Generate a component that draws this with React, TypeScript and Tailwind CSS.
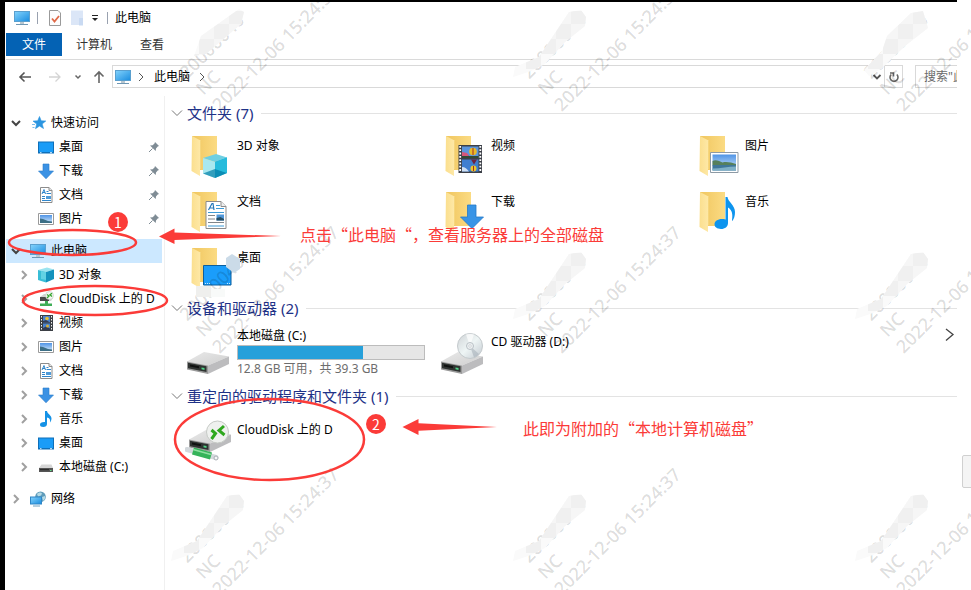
import type { ReactNode } from 'react';

type IconName =
  | 'star'
  | 'pc'
  | 'desktop'
  | 'download'
  | 'document'
  | 'picture'
  | 'cube'
  | 'cloud'
  | 'video'
  | 'music'
  | 'disk'
  | 'network';

interface NavEntry {
  label: string;
  icon: IconName;
  pinned?: boolean;
}

const quickAccess: NavEntry[] = [
  { label: '桌面', icon: 'desktop', pinned: true },
  { label: '下载', icon: 'download', pinned: true },
  { label: '文档', icon: 'document', pinned: true },
  { label: '图片', icon: 'picture', pinned: true },
];

const thisPc: NavEntry[] = [
  { label: '3D 对象', icon: 'cube' },
  { label: 'CloudDisk 上的 D', icon: 'cloud' },
  { label: '视频', icon: 'video' },
  { label: '图片', icon: 'picture' },
  { label: '文档', icon: 'document' },
  { label: '下载', icon: 'download' },
  { label: '音乐', icon: 'music' },
  { label: '桌面', icon: 'desktop' },
  { label: '本地磁盘 (C:)', icon: 'disk' },
];

const folders: NavEntry[] = [
  { label: '3D 对象', icon: 'cube' },
  { label: '视频', icon: 'video' },
  { label: '图片', icon: 'picture' },
  { label: '文档', icon: 'document' },
  { label: '下载', icon: 'download' },
  { label: '音乐', icon: 'music' },
  { label: '桌面', icon: 'desktop' },
];

/* ---------- shared gradients ---------- */

function Gradients() {
  return (
    <svg className="absolute size-0" aria-hidden="true">
      <defs>
        <linearGradient id="screen" x1="0" y1="0" x2="1" y2="1">
          <stop offset="0" stopColor="#7fd0fb" />
          <stop offset="1" stopColor="#1e8fe0" />
        </linearGradient>
        <linearGradient id="flap" x1="0" y1="0" x2="1" y2="0">
          <stop offset="0" stopColor="#fbdf8e" />
          <stop offset="1" stopColor="#fee9a9" />
        </linearGradient>
        <linearGradient id="back" x1="0" y1="0" x2="1" y2="0">
          <stop offset="0" stopColor="#f0c65f" />
          <stop offset="1" stopColor="#fbdb83" />
        </linearGradient>
        <linearGradient id="diskTop" x1="0" y1="0" x2="1" y2="1">
          <stop offset="0" stopColor="#e9e9e9" />
          <stop offset="1" stopColor="#cfcfcf" />
        </linearGradient>
        <linearGradient id="disc" x1="0" y1="0" x2="1" y2="1">
          <stop offset="0" stopColor="#cfd3d6" />
          <stop offset="0.5" stopColor="#eef5f5" />
          <stop offset="1" stopColor="#c2c8cf" />
        </linearGradient>
        <linearGradient id="sky" x1="0" y1="0" x2="0" y2="1">
          <stop offset="0" stopColor="#4f94e6" />
          <stop offset="1" stopColor="#d5e9fa" />
        </linearGradient>
      </defs>
    </svg>
  );
}

/* ---------- small icons, 16x16 ---------- */

const smallIcons: Record<IconName, ReactNode> = {
  star: (
    <>
      <path d="M9.5 1.5l1.7 4.3 4.6.2-3.6 2.9 1.3 4.6-4-2.5-4 2.7 1.2-4.7L3 6.1l4.7-.3z" fill="#2b95e0" stroke="#2b95e0" strokeWidth=".6" />
      <path d="M2 9.5h3M2.5 12.5h2" stroke="#7dbdea" />
    </>
  ),
  pc: (
    <>
      <path d="M0 1h16v11H0z" fill="#5a9fce" />
      <path d="M1 2h14v9H1z" fill="url(#screen)" />
      <path d="M6 12h4v2H6z" fill="#b9c7d0" />
      <path d="M2 14.500h12" stroke="#6f97b3" />
    </>
  ),
  desktop: (
    <>
      <path d="M0 2.5h16v12H0z" fill="#0f6fb8" />
      <path d="M1 3.5h14v9.5H1z" fill="#1a9cf7" />
      <path d="M2 13.7h1.5M12 13.7h2" stroke="#d8f0ff" />
    </>
  ),
  download: <path d="M5 1h6v7h4.5L8 15.8.5 8H5z" fill="#3b92e4" stroke="#2a7ccb" strokeWidth=".6" />,
  document: (
    <>
      <path d="M2.5.5h8.500l3 3v12h-11.500z" fill="#fff" stroke="#8c8c8c" />
      <path d="M11 .5v3h3" fill="#e7e7e7" stroke="#8c8c8c" />
      <path d="M4 7l2-4.500L7.500 7M4.500 5.500h2.500M8.500 4.500h2M8.500 6.500H13M4 9.500h3M4 11.500h3M4 13.500h9" stroke="#2f86cc" fill="none" />
      <path d="M8 9h5v3H8z" fill="#4f9bd8" />
    </>
  ),
  picture: (
    <>
      <path d="M.5 2.500h15v11H.5z" fill="#fff" stroke="#9a9a9a" />
      <path d="M2 4h12v8H2z" fill="url(#sky)" />
      <path d="M2 7.500l3 .5 5 2 4 .5v1.500H2z" fill="#3d6f86" />
    </>
  ),
  cube: (
    <>
      <path d="M0 3l9-2.500 7 2-8 2.500z" fill="#9be4f0" />
      <path d="M0 3l8 2v10.500L0 13z" fill="#38bdd6" />
      <path d="M8 5l8-2.500V12l-8 3.500z" fill="#1492bd" />
      <path d="M3 4l5 1v8l-5-1z" fill="#62d2e4" />
    </>
  ),
  cloud: (
    <>
      <path d="M2 6l4-3h9v4l-2 3H2z" fill="#d2d2d2" />
      <path d="M2 6h9v4H2z" fill="#4a4a4a" />
      <circle cx="11.500" cy="4.500" r="4" fill="#f3f7f2" stroke="#c3c8c2" strokeWidth=".6" />
      <path d="M9 3.500l2 1.500-2 2M14 2.200l-2 1.600 2 1.600" stroke="#35a52d" strokeWidth="1.300" fill="none" />
      <path d="M7 10h3v2.500h4V15H2v-2.500h5z" fill="#3fae57" />
    </>
  ),
  video: (
    <>
      <path d="M2 0h13v16H2z" fill="#3b3f45" />
      <path d="M5 1h7v6.500H5zM5 8.500h7V15H5z" fill="#4b83cf" />
      <path d="M3.500 1v15M13.500 1v15" stroke="#f2f2f2" strokeDasharray="1.500 1.500" />
      <circle cx="9" cy="3.500" r="1.800" fill="#e5c233" />
      <path d="M5 6l3-1 4 2.500H5zM5 13l3-1.500 4 2V15H5z" fill="#333b54" />
      <circle cx="9.500" cy="11" r="1.500" fill="#d9b035" />
    </>
  ),
  music: (
    <path d="M7 0h2c.3 3 4.500 4 4.500 7.500 0 1.500-.7 3-1.500 4 .5-3-.5-4.500-3-5v6.500c0 1.800-1.500 3-3.700 3-2 0-3.300-1-3.300-2.300 0-1.700 2-2.900 5-2.600z" fill="#1592e6" />
  ),
  disk: (
    <>
      <path d="M3.500 5.500h10L15 9H1z" fill="#d6d6d6" />
      <path d="M1 9h14v4H1z" fill="#555" />
      <path d="M2 10h9v1.200H2z" fill="#2c2c2c" />
      <path d="M12 11h1.500v1H12z" fill="#5fe08a" />
    </>
  ),
  network: (
    <>
      <circle cx="10.500" cy="5.800" r="5.300" fill="#5f9cba" />
      <path d="M7 3c2-2 4-2 5-.500l-1 2-3 1zM12 6l3-1c.5 2-.5 4-2 5z" fill="#b7dbe6" />
      <path d="M0 5.500h12v8H0z" fill="#2f86c6" />
      <path d="M1 6.500h10v6H1z" fill="url(#screen)" />
      <path d="M3 15h7" stroke="#6fa0c0" />
    </>
  ),
};

function SmallIcon({ name }: { name: IconName }) {
  return (
    <svg viewBox="0 0 16 16" className="size-4 shrink-0" aria-hidden="true">
      {smallIcons[name]}
    </svg>
  );
}

function Chevron({ dir, className }: { dir: 'right' | 'down'; className: string }) {
  return (
    <svg viewBox="0 0 12 12" className={`size-3 shrink-0 ${className}`} fill="none" stroke="currentColor" aria-hidden="true">
      <path d={dir === 'right' ? 'M4 2l4 4-4 4' : 'M2 4l4 4 4-4'} />
    </svg>
  );
}

function Pin() {
  return (
    <svg viewBox="0 0 12 12" className="size-3 shrink-0" aria-hidden="true">
      <path d="M7 1l4 4-1.300.5L8 7.500l-.3 2.500L2 4.500l2.700-.2L6.500 2.400z" fill="#7f8c95" />
      <path d="M4.500 7.500L1 11" stroke="#7f8c95" />
    </svg>
  );
}

/* ---------- large icons, 48x48 ---------- */

const folderOverlays: Partial<Record<IconName, ReactNode>> = {
  cube: (
    <>
      <path d="M18 26l13-4 11 3.500L30 30z" fill="#6fcfe2" />
      <path d="M18 26l12 4v16l-12-4.500z" fill="#a9e8ef" />
      <path d="M30 30l12-4.500V41l-12 5z" fill="#12a5cd" />
      <path d="M18 41.500L30 37l12 4-12 5z" fill="#0b86ac" opacity=".75" />
      <path d="M30 30v7l12 4V25.500z" fill="#26bbdc" />
    </>
  ),
  video: (
    <>
      <path d="M19.500 13h23.500v28H19.500z" fill="#3c4048" />
      <path d="M23 14.500h16.500V26H23z" fill="#5b95dd" />
      <path d="M23 27.500h16.500V39.500H23z" fill="#3f7ed0" />
      <path d="M21.200 14v26M41.300 14v26" stroke="#fff" strokeWidth="1.800" strokeDasharray="1.800 1.500" />
      <path d="M23 22c3-1 5 0 7 2h9.500v2H23z" fill="#324a35" />
      <path d="M23 20l5 1 2 3h-7z" fill="#d6567a" />
      <circle cx="34" cy="19.500" r="3.800" fill="#e9bb28" />
      <path d="M33.500 16h1v7h-1z" fill="#a62d22" />
      <path d="M32 27.500h6l-3 5z" fill="#6f2340" />
      <path d="M23 35c3 0 5 2 7 4.500h-7z" fill="#cfe0f4" />
      <circle cx="34.500" cy="36.500" r="3" fill="#edc62d" />
      <path d="M34 34h1v5h-1z" fill="#a62d22" />
    </>
  ),
  picture: (
    <>
      <path d="M17.500 20.500h27.500v20H17.500z" fill="#fff" stroke="#8d9aa5" />
      <path d="M19.500 22.500h23.500v16H19.500z" fill="url(#sky)" />
      <path d="M19.500 29c3-2 7 0 10 1.500 4-1 9 0 13.500 1.500v1.500H19.500z" fill="#56805b" />
      <path d="M19.500 33h23.500v5.500H19.500z" fill="#3f7799" />
      <path d="M19.500 36.500c8 0 16-2 23.500-2v4H19.500z" fill="#7fb0c6" />
    </>
  ),
  document: (
    <>
      <path d="M21 13.500h15l5 5v22H21z" fill="#fff" stroke="#8b8b8b" />
      <path d="M36 13.500v5h5" fill="#ededed" stroke="#8b8b8b" />
      <path d="M23.500 22l3.500-6.500h1L29 22M25 20h3.500" stroke="#2376b8" strokeWidth="1.200" fill="none" />
      <path d="M31 17.500h4M31 20.500h8M23 24.500h16M23 38h16" stroke="#3c9ad6" strokeWidth="1.200" />
      <path d="M23 27.500h7M23 31h7M23 34.500h16" stroke="#80868b" />
      <path d="M31.500 26.500h7.500v6h-7.500z" fill="#4f96d8" />
      <path d="M31.500 30l4-1 3.500 2v1.500h-7.500z" fill="#274e63" />
    </>
  ),
  download: <path d="M28.500 17h8.500v12h7.500L33 40.500 21.500 29h7z" fill="#3894e6" stroke="#2379c8" strokeWidth=".8" />,
  music: (
    <path d="M32.500 9h2c.5 5 7.500 8 7.500 15 0 4-1 7-2.700 9-1-.5 2.500-9.500-4.300-13.500V35c0 3.800-3 6-7 6s-6.500-2-6.500-4.700c0-3.500 4.500-6.200 11-4.800z" fill="#0d94ee" />
  ),
  desktop: (
    <>
      <path d="M18.500 21.500h27.500v19.500H18.500z" fill="#1a9dfb" stroke="#0b5f9e" />
      <path d="M20 39.500h6M42 39.500h3" stroke="#c6e9ff" strokeDasharray="1 1" />
    </>
  ),
};

function FolderIcon({ name }: { name: IconName }) {
  return (
    <svg viewBox="0 0 48 48" className="mt-1 size-12 shrink-0" aria-hidden="true">
      <path d="M7 4h25v34H7z" fill="url(#back)" />
      <path d="M7 4l8.500 4.500c1 1 .5 4-.5 6V44l-8.500-5z" fill="url(#flap)" />
      <path d="M15.500 9v28" stroke="#f6d67c" />
      {folderOverlays[name]}
    </svg>
  );
}

function DriveBody() {
  return (
    <>
      <path d="M2 33.500L19 24l25 4.500-21 9z" fill="url(#diskTop)" />
      <path d="M2 33.500l21 4V46L2 41.500z" fill="#9a9a9a" />
      <path d="M3 34.700l18.500 3.600V44L3 40.300z" fill="#2f3331" />
      <path d="M5 36.500l9 1.800v2L5 38.500z" fill="#0f1110" />
      <path d="M16.500 39.500l3 .6v1.800l-3-.6z" fill="#4fd486" />
      <path d="M23 37.500l21-9V36l-21 10z" fill="#bcbcbe" />
    </>
  );
}

function DriveIcon({ kind }: { kind: 'disk' | 'cd' | 'cloud' }) {
  return (
    <svg viewBox="0 0 48 48" className="mt-2 size-12 shrink-0" aria-hidden="true">
      {kind === 'cloud' ? (
        <>
          <g transform="translate(2 -10)">
            <DriveBody />
          </g>
          <path d="M2 33.500l29 8" stroke="#d3d8dc" strokeWidth="5" strokeLinecap="round" />
          <path d="M8 35l18 5" stroke="#35b35a" strokeWidth="7.500" />
          <path d="M8 33.500l18 5" stroke="#8ee0a0" strokeWidth="1.500" />
          <circle cx="31" cy="42" r="2" fill="#f5f7f8" stroke="#a9b0b6" />
          <circle cx="32.500" cy="16" r="11" fill="#eff1ef" stroke="#c6cac6" />
          <path d="M26.500 14l4 3.500-4 5.500M39 10l-5 4.500 5.500 4.500" stroke="#2fa81f" strokeWidth="3" fill="none" />
        </>
      ) : (
        <>
          <DriveBody />
          {kind === 'cd' && (
            <>
              <circle cx="31" cy="18" r="12.500" fill="url(#disc)" stroke="#c4cacd" />
              <path d="M31 18l-4-11.500A12 12 0 0 1 35 6.500z" fill="#fff" opacity=".7" />
              <path d="M31 18l9 8a12 12 0 0 1-5 3.500z" fill="#a9b2ba" opacity=".6" />
              <circle cx="31" cy="18" r="3.500" fill="#edf1f2" stroke="#b9c0c5" />
              <circle cx="31" cy="18" r="1.300" fill="#fff" stroke="#b9c0c5" strokeWidth=".6" />
            </>
          )}
        </>
      )}
    </svg>
  );
}

/* ---------- window chrome ---------- */

function TitleBar() {
  return (
    <header className="flex h-[31px] items-center pl-2 text-black">
      <SmallIcon name="pc" />
      <span className="ml-[7px] h-3 w-px bg-gray-400" />
      <button aria-label="属性" className="ml-[9px]">
        <svg viewBox="0 0 16 16" className="size-4" fill="none">
          <path d="M2.500.5h8.500l2.500 2.500v12.500h-11z" fill="#fdfdfd" stroke="#9a9a9a" />
          <path d="M5 8.500l2.500 3L12 6" stroke="#e06a48" strokeWidth="1.800" />
        </svg>
      </button>
      <button aria-label="新建文件夹" className="ml-[7px]">
        <svg viewBox="0 0 16 16" className="size-4">
          <path d="M1 .5h12V15H1z" fill="#dbe6f7" />
          <path d="M9 8h4v7.500H9z" fill="#c9daf2" />
        </svg>
      </button>
      <button aria-label="自定义快速访问工具栏" className="ml-[5px]">
        <svg viewBox="0 0 8 8" className="size-2">
          <path d="M1 1.500h6" stroke="#222" />
          <path d="M1 4h6L4 7z" fill="#222" />
        </svg>
      </button>
      <span className="ml-2 h-3 w-px bg-gray-400" />
      <h1 className="ml-[7px]">此电脑</h1>
    </header>
  );
}

function Ribbon() {
  return (
    <div className="flex h-[27px] items-start border-b border-[#dadada] text-[#333]">
      <button className="h-[23px] bg-[#0462b4] px-4 text-white">文件</button>
      <button className="h-[23px] px-[14px]">计算机</button>
      <button className="h-[23px] px-[14px]">查看</button>
    </div>
  );
}

function AddressBar() {
  return (
    <div className="flex h-7 items-stretch pt-[5px]">
      <div className="flex w-[106px] shrink-0 items-center pl-3">
        <button aria-label="后退" className="text-[#555]">
          <svg viewBox="0 0 14 14" className="size-[14px]" fill="none" stroke="currentColor" strokeWidth="1.600">
            <path d="M13 7H2M6.500 2.500L2 7l4.500 4.500" />
          </svg>
        </button>
        <button aria-label="前进" className="ml-4 text-[#d4d4d4]">
          <svg viewBox="0 0 14 14" className="size-[14px]" fill="none" stroke="currentColor" strokeWidth="1.300">
            <path d="M1 7h11M7.500 2.500L12 7l-4.500 4.500" />
          </svg>
        </button>
        <button aria-label="最近浏览的位置" className="ml-[11px] text-[#666]">
          <svg viewBox="0 0 10 10" className="size-[10px]" fill="none" stroke="currentColor" strokeWidth="1.500">
            <path d="M2.500 3.500L5 6l2.500-2.500" />
          </svg>
        </button>
        <button aria-label="向上" className="ml-[9px] text-[#666]">
          <svg viewBox="0 0 14 14" className="size-[14px]" fill="none" stroke="currentColor" strokeWidth="1.600">
            <path d="M7 13V2M2.500 6.500L7 2l4.500 4.500" />
          </svg>
        </button>
      </div>
      <div className="flex min-w-0 flex-1 items-center border border-[#d9d9d9] pl-[2px]">
        <SmallIcon name="pc" />
        <Chevron dir="right" className="ml-1 text-[#555]" />
        <button className="ml-[7px] text-black">此电脑</button>
        <Chevron dir="right" className="ml-[6px] text-[#555]" />
        <button aria-label="上一个位置" className="ml-auto mr-px text-[#555]">
          <svg viewBox="0 0 12 12" className="size-3" fill="none" stroke="currentColor" strokeWidth="1.800">
            <path d="M2.500 4L6 7.500 9.500 4" />
          </svg>
        </button>
        <button aria-label="刷新" className="flex h-full w-[18px] items-center justify-center border-l border-[#d9d9d9] text-[#666]">
          <svg viewBox="0 0 12 12" className="size-3" fill="none" stroke="currentColor" strokeWidth="1.600">
            <path d="M8.800 3.500a4 4 0 1 1-5.600 0" />
            <path d="M2 2h3.500v3.500" />
          </svg>
        </button>
      </div>
      <input
        type="text"
        aria-label="搜索"
        placeholder={'搜索"此电脑"'}
        className="ml-3 w-[42px] shrink-0 border border-r-0 border-[#d9d9d9] pl-2 placeholder:text-[#6b6b6b]"
      />
    </div>
  );
}

/* ---------- navigation pane ---------- */

function NavRoot({ label, icon, open, active }: { label: string; icon: IconName; open?: boolean; active?: boolean }) {
  return (
    <button className={`flex h-6 w-full items-center pl-1 text-left ${active ? 'bg-[#cce8ff]' : ''}`}>
      <Chevron dir={open ? 'down' : 'right'} className={open ? 'mr-2 stroke-2 text-[#444]' : 'mr-2 stroke-2 text-[#a0a0a0]'} />
      <SmallIcon name={icon} />
      <span className="ml-[5px]">{label}</span>
    </button>
  );
}

function NavChild({ entry }: { entry: NavEntry }) {
  return (
    <button className="flex h-6 w-full items-center pl-3 text-left">
      {entry.pinned ? (
        <span className="mr-2 w-3 shrink-0" />
      ) : (
        <Chevron dir="right" className="mr-2 stroke-2 text-[#a0a0a0]" />
      )}
      <SmallIcon name={entry.icon} />
      <span className="ml-[5px] flex-1 whitespace-nowrap">{entry.label}</span>
      {entry.pinned && (
        <span className="mr-[2px]">
          <Pin />
        </span>
      )}
    </button>
  );
}

function Sidebar() {
  return (
    <nav className="mt-2 w-[159px] shrink-0 border-r border-[#f0f0f0] pt-[15px] pr-[2px]">
      <NavRoot label="快速访问" icon="star" open />
      {quickAccess.map((entry) => (
        <NavChild key={entry.label} entry={entry} />
      ))}
      <div className="mt-2">
        <NavRoot label="此电脑" icon="pc" open active />
        {thisPc.map((entry) => (
          <NavChild key={entry.label} entry={entry} />
        ))}
      </div>
      <div className="mt-2">
        <NavRoot label="网络" icon="network" />
      </div>
    </nav>
  );
}

/* ---------- content ---------- */

function Group({ title, children }: { title: string; children: ReactNode }) {
  return (
    <section>
      <button className="flex h-6 w-full items-center pl-[6px] text-left text-[15px] text-[#1e3287]">
        <svg viewBox="0 0 12 12" className="size-3 shrink-0" fill="none" stroke="#777" aria-hidden="true">
          <path d="M1 3.500l5 5 5-5" />
        </svg>
        <h2 className="mr-2 ml-1 whitespace-nowrap">{title}</h2>
        <span className="mt-px h-px flex-1 bg-[#e3e3e3]" />
      </button>
      <div className="grid grid-cols-[repeat(3,254px)] pl-5">{children}</div>
    </section>
  );
}

function FolderTile({ entry }: { entry: NavEntry }) {
  return (
    <button className="flex h-14 items-start text-left">
      <FolderIcon name={entry.icon} />
      <span className="ml-1 pt-[9px]">{entry.label}</span>
    </button>
  );
}

function DriveTile({ kind, label }: { kind: 'cd' | 'cloud'; label: string }) {
  return (
    <button className="flex h-16 items-start text-left">
      <DriveIcon kind={kind} />
      <span className="ml-1 pt-[13px]">{label}</span>
    </button>
  );
}

function LocalDisk({ used }: { used: number }) {
  return (
    <button className="flex h-16 items-start text-left">
      <DriveIcon kind="disk" />
      <span className="ml-1 w-[188px] pt-[7px]">
        <span className="block">本地磁盘 (C:)</span>
        <span className="block h-[15px] border border-[#bcbcbc] bg-[#e6e6e6]">
          <span className="block h-full bg-[#26a0da]" style={{ width: `${used}%` }} />
        </span>
        <span className="block text-[#6d6d6d]">12.8 GB 可用，共 39.3 GB</span>
      </span>
    </button>
  );
}

function Content() {
  return (
    <main className="mt-2 min-w-0 flex-1 pt-[5px]">
      <Group title="文件夹 (7)">
        {folders.map((entry, i) => (
          <div key={entry.label} className={i < 3 ? 'pt-[3px]' : ''}>
            <FolderTile entry={entry} />
          </div>
        ))}
      </Group>
      <Group title="设备和驱动器 (2)">
        <LocalDisk used={67} />
        <DriveTile kind="cd" label="CD 驱动器 (D:)" />
      </Group>
      <Group title="重定向的驱动程序和文件夹 (1)">
        <DriveTile kind="cloud" label="CloudDisk 上的 D" />
      </Group>
    </main>
  );
}

/* ---------- overlays ---------- */

const stripOutline = 'M0 76L2 66l24-10L56 11l12-2 5 7-1 9-20 16-20 22-14 7z';
const stripOutlines: Record<number, string> = {
  0: 'M23 55l7-20L68 8l5 3-3 12-35 30z',
  2: 'M9 69l18-19 5-15 24-23 12-2 5 17-23 18-24 23-12 7z',
};

// Pixelated strip that hides most of the account number
function Mosaic({ index }: { index: number }) {
  if (index === 3) {
    return (
      <svg viewBox="0 0 80 80" className="absolute -top-14 -left-7 size-20">
        <path d="M25 43h15v11H25z" fill="#efefed" />
        <path d="M40 46h14v8H40z" fill="#f8faf9" />
        <path d="M55 15l6-4 8 5v10l-6 4-8-6z" fill="#cbdbe8" />
      </svg>
    );
  }
  return (
    <svg viewBox="0 0 80 80" className="absolute -top-14 -left-7 size-20">
      <clipPath id={`strip-${index}`}>
        <path d={stripOutlines[index] ?? stripOutline} />
      </clipPath>
      <g clipPath={`url(#strip-${index})`}>
        <path d="M0 0h80v80H0z" fill="#fafafa" />
        <path d="M58 10h15v13H58zM43 23h15v15H43zM28 38h15v15H28zM13 53h15v15H13z" fill="#f0f0f0" />
        <path d="M43 8h15v15H43zM28 23h15v15H28zM58 23h15v15H58zM43 38h15v15H43z" fill="#f6f6f6" />
      </g>
    </svg>
  );
}

function Watermarks() {
  return (
    <div
      aria-hidden="true"
      className="pointer-events-none absolute inset-0 grid auto-rows-[242px] grid-cols-[repeat(3,342px)] overflow-hidden pt-[57px] pl-[199px] font-['Noto_Sans',sans-serif] text-[18px] leading-[23px] font-medium text-black/15"
    >
      {Array.from({ length: 9 }, (_, i) => (
        <div key={i} className="relative size-0">
          <div className="h-[69px] w-[180px] origin-left -rotate-45 whitespace-nowrap">
            <p>20000040</p>
            <p>NC</p>
            <p>2022-12-06 15:24:37</p>
          </div>
          <Mosaic index={i} />
        </div>
      ))}
    </div>
  );
}

function Annotations() {
  return (
    <div className="pointer-events-none absolute inset-0 overflow-hidden font-['Noto_Sans_CJK_SC',sans-serif] text-base leading-6 text-[#fb3b38] [text-spacing-trim:space-all]">
      <svg width="971" height="590" className="absolute top-0 left-0" aria-hidden="true">
        <g fill="none" stroke="#fb3b38" strokeWidth="2.500">
          <ellipse cx="72.500" cy="242.500" rx="63.500" ry="12.500" />
          <ellipse cx="95" cy="300.500" rx="72" ry="14.500" />
          <ellipse cx="269.500" cy="439.500" rx="94.500" ry="40.500" />
        </g>
        <g fill="#fb3b38">
          <path d="M159 236.500l15.500-8v4L281 236l-106.500 4v4z" />
          <path d="M402.500 427l16-8v4.200L497 427l-78.500 3.800v4.200z" />
        </g>
      </svg>
      <span className="absolute top-[212px] left-[108px] size-5 rounded-full bg-[#fb3b38] text-center text-sm leading-5 text-white">1</span>
      <span className="absolute top-[414px] left-[366px] size-5 rounded-full bg-[#fb3b38] text-center text-sm leading-5 text-white">2</span>
      <p className="absolute top-[222px] left-[300px] whitespace-nowrap">点击“此电脑“，查看服务器上的全部磁盘</p>
      <p className="absolute top-[416px] left-[523px] whitespace-nowrap">此即为附加的“本地计算机磁盘”</p>
    </div>
  );
}

export default function App() {
  return (
    <div
      lang="zh-CN"
      className="relative flex min-h-screen overflow-hidden bg-white font-['Noto_Sans','Noto_Sans_CJK_SC',sans-serif] text-xs leading-[18px] text-black"
    >
      <Gradients />
      <div className="flex min-w-0 flex-1 flex-col border-t-2 border-l-[5px] border-black pl-px">
        <TitleBar />
        <Ribbon />
        <AddressBar />
        <div className="flex flex-1">
          <Sidebar />
          <Content />
        </div>
      </div>
      <aside className="relative w-[14px] shrink-0">
        <button aria-label="下一张" className="absolute top-[327px] -left-3 text-[#444]">
          <svg viewBox="0 0 10 16" className="h-4 w-[10px]" fill="none" stroke="currentColor" strokeWidth="1.300">
            <path d="M1 2l7 5.500L1 13.500" />
          </svg>
        </button>
        <span className="absolute top-[455px] left-[5px] h-[33px] w-4 rounded-[2px] border border-[#d0d0d0] bg-[#f4f4f4]" />
      </aside>
      <Watermarks />
      <Annotations />
    </div>
  );
}
